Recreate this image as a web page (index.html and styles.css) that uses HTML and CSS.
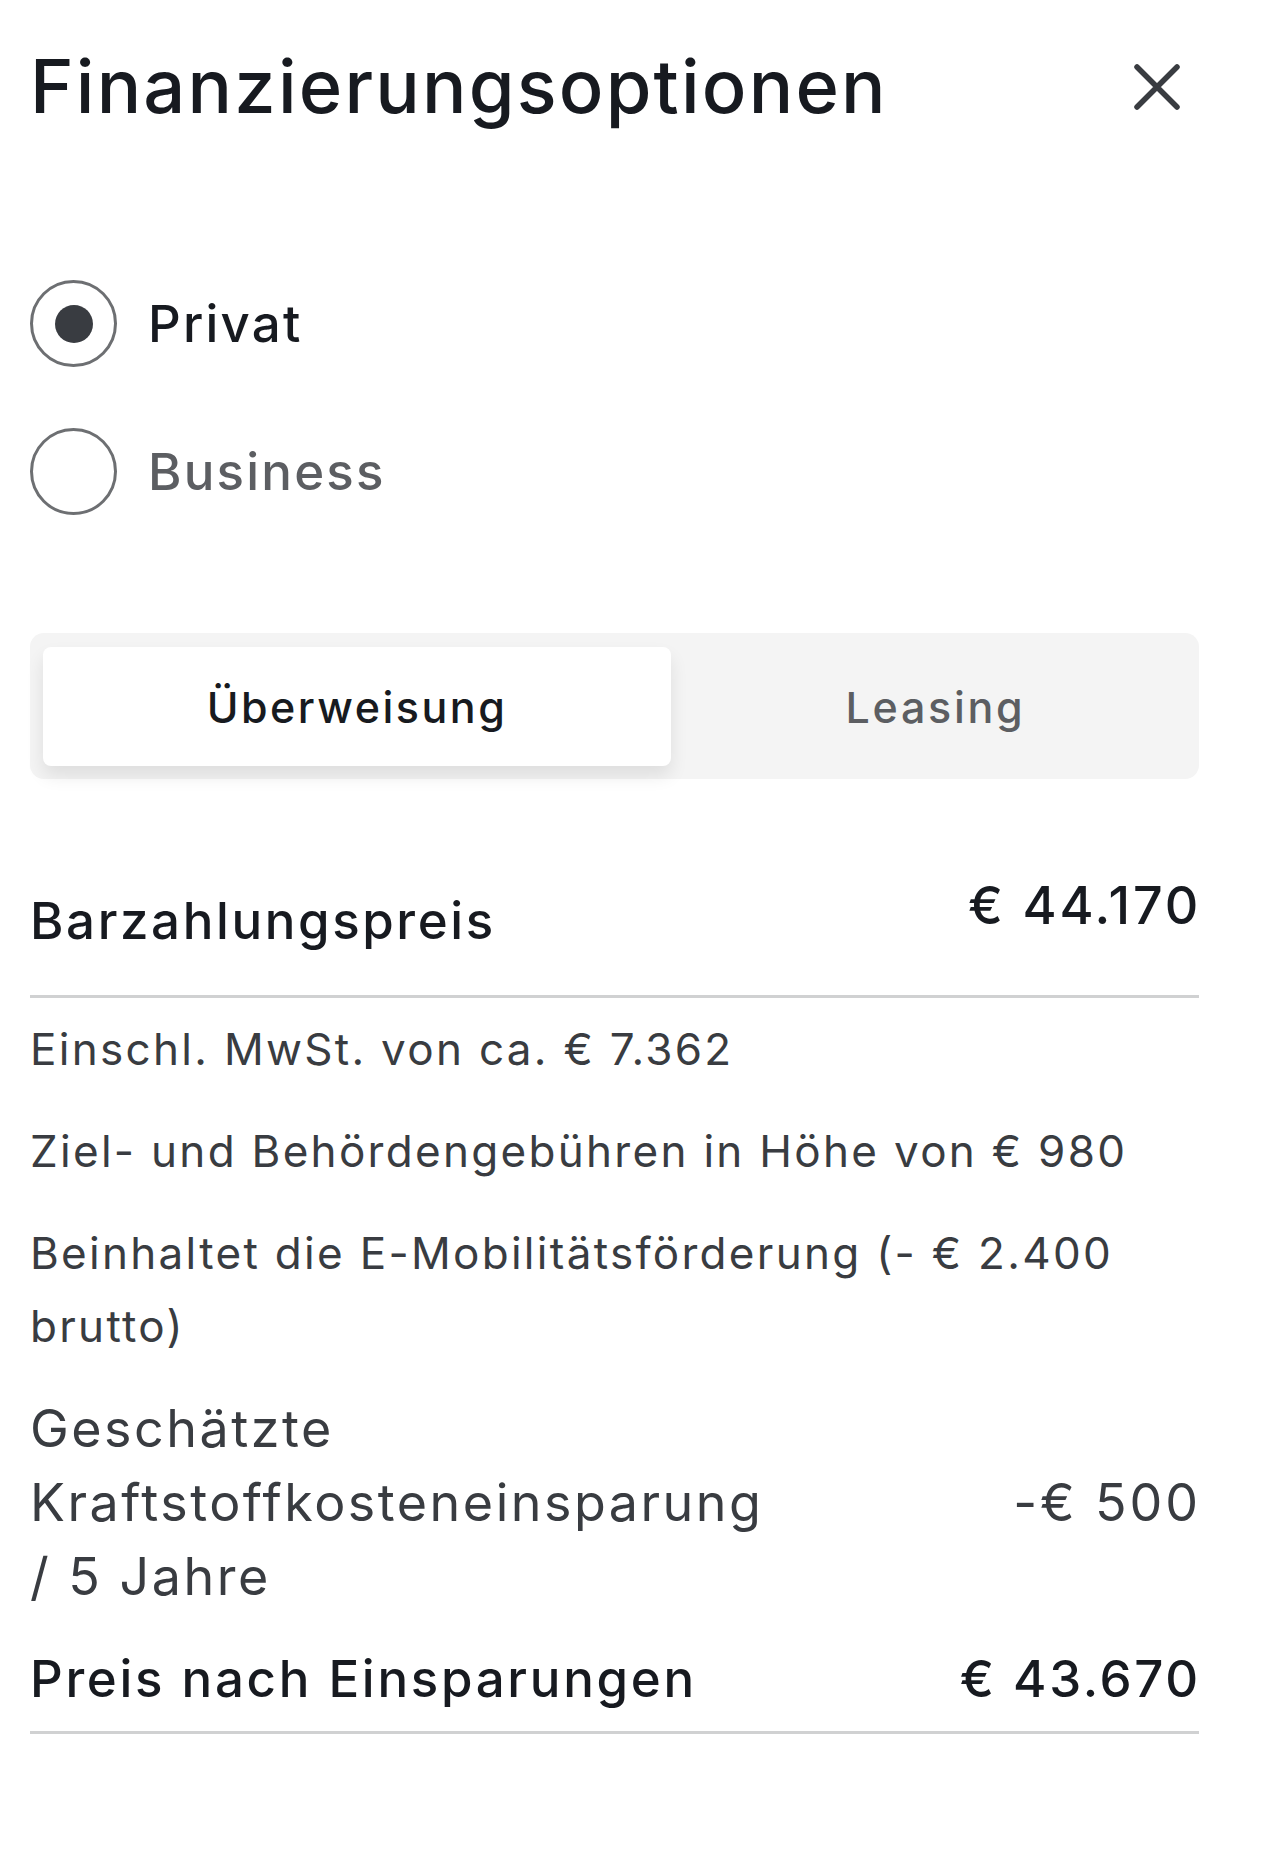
FILE: index.html
```html
<!DOCTYPE html>
<html lang="de">
<head>
<meta charset="utf-8">
<title>Finanzierungsoptionen</title>
<link rel="stylesheet" href="styles.css">
</head>
<body>
<main class="panel">
  <header class="header">
    <h1 class="title">Finanzierungsoptionen</h1>
    <button class="close" aria-label="Schließen">
      <svg viewBox="0 0 48 48" width="48" height="48"><path d="M4 4 L44 44 M44 4 L4 44" stroke="#393c41" stroke-width="5.5" stroke-linecap="round" fill="none"/></svg>
    </button>
  </header>

  <div class="radios">
    <label class="radio checked"><span class="circle"><span class="dot"></span></span><span class="radio-label">Privat</span></label>
    <label class="radio"><span class="circle"></span><span class="radio-label">Business</span></label>
  </div>

  <div class="segment">
    <div class="seg-item active">Überweisung</div>
    <div class="seg-item">Leasing</div>
  </div>

  <section class="prices">
    <div class="price-head">
      <span class="price-title">Barzahlungspreis</span>
      <span class="price-value">€ 44.170</span>
    </div>
    <p class="note">Einschl. MwSt. von ca. € 7.362</p>
    <p class="note">Ziel- und Behördengebühren in Höhe von € 980</p>
    <p class="note">Beinhaltet die E-Mobilitätsförderung (- € 2.400 brutto)</p>
    <div class="saving">
      <span class="saving-label">Geschätzte Kraftstoffkosteneinsparung / 5 Jahre</span>
      <span class="saving-value">-€ 500</span>
    </div>
    <div class="total">
      <span class="total-label">Preis nach Einsparungen</span>
      <span class="total-value">€ 43.670</span>
    </div>
  </section>
</main>
</body>
</html>
```

FILE: styles.css
```css
* { box-sizing: border-box; }
html, body { margin: 0; padding: 0; background: #fff; }
body {
  font-family: Inter, "Noto Sans", "Liberation Sans", sans-serif;
  color: #171a20;
}
.panel {
  width: 1199px;
  padding: 42px 0 0 30px;
}
.header {
  display: flex;
  justify-content: space-between;
  align-items: center;
  height: 89px;
}
.title {
  margin: 0;
  font-size: 74px;
  font-weight: 500;
  line-height: 89px;
  letter-spacing: 2.2px;
}
.close {
  border: 0;
  background: none;
  padding: 0;
  width: 48px;
  height: 48px;
  margin-right: 18px;
  display: flex;
}
.radios {
  display: flex;
  flex-direction: column;
  gap: 61px;
  margin-top: 149px;
}
.radio {
  display: flex;
  align-items: center;
  gap: 31px;
  height: 87px;
}
.circle {
  width: 87px;
  height: 87px;
  border: 3px solid #6d6f72;
  border-radius: 50%;
  display: flex;
  align-items: center;
  justify-content: center;
}
.dot {
  width: 38px;
  height: 38px;
  border-radius: 50%;
  background: #393c41;
}
.radio-label {
  font-size: 51px;
  font-weight: 500;
  letter-spacing: 2.2px;
  color: #5c5e62;
}
.radio.checked .radio-label { color: #171a20; }

.segment {
  margin-top: 118px;
  height: 146px;
  background: #f4f4f4;
  border-radius: 14px;
  padding: 14px 13px 13px;
  display: flex;
}
.seg-item {
  display: flex;
  align-items: center;
  justify-content: center;
  font-size: 43px;
  font-weight: 500;
  letter-spacing: 2.7px;
  color: #5c5e62;
  flex: 1;
  padding-left: 14px;
}
.seg-item.active {
  flex: 0 0 628px;
  padding-left: 0;
  letter-spacing: 2.5px;
  background: #fff;
  color: #171a20;
  border-radius: 8px;
  box-shadow: 0 10px 18px rgba(0, 0, 0, 0.09);
}

.prices { margin-top: 96px; }
.price-head {
  display: flex;
  justify-content: space-between;
  align-items: flex-start;
  border-bottom: 3px solid #d0d1d2;
  padding-bottom: 43px;
}
.price-title {
  font-size: 51px;
  font-weight: 500;
  letter-spacing: 2.6px;
  line-height: 62px;
  padding-top: 15px;
}
.price-value {
  font-size: 52px;
  font-weight: 500;
  letter-spacing: 2.8px;
  line-height: 62px;
  margin-right: -2px;
}
.note {
  margin: 15px 0 29px;
  font-size: 44px;
  line-height: 73px;
  letter-spacing: 2.3px;
  color: #393c41;
}
.note + .note { margin-top: 0; }
.saving {
  display: flex;
  justify-content: space-between;
  align-items: center;
  font-size: 52px;
  line-height: 74px;
  letter-spacing: 2.5px;
  color: #393c41;
  margin-top: 3px;
}
.saving-label { width: 750px; }
.saving-value { margin-right: -2px; letter-spacing: 2.9px; }
.total {
  display: flex;
  justify-content: space-between;
  align-items: center;
  border-bottom: 3px solid #d0d1d2;
  font-size: 51px;
  font-weight: 500;
  letter-spacing: 2.7px;
  line-height: 73px;
  padding: 28px 0 16px;
}
.total-value { margin-right: -2px; }
```
